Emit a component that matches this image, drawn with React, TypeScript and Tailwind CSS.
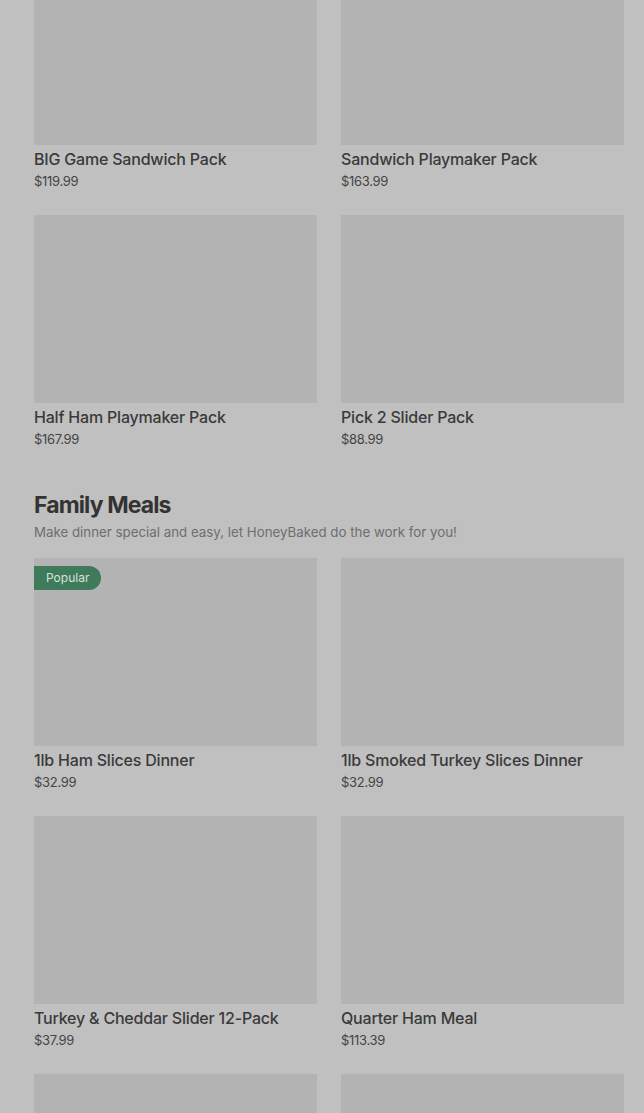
type Product = {
  name?: string;
  price?: string;
  badge?: string;
};

const topProducts: Product[] = [
  { name: "BIG Game Sandwich Pack", price: "$119.99" },
  { name: "Sandwich Playmaker Pack", price: "$163.99" },
  { name: "Half Ham Playmaker Pack", price: "$167.99" },
  { name: "Pick 2 Slider Pack", price: "$88.99" },
];

// last row only shows its images above the fold
const familyMeals: Product[] = [
  { name: "1lb Ham Slices Dinner", price: "$32.99", badge: "Popular" },
  { name: "1lb Smoked Turkey Slices Dinner", price: "$32.99" },
  { name: "Turkey & Cheddar Slider 12-Pack", price: "$37.99" },
  { name: "Quarter Ham Meal", price: "$113.39" },
  {},
  {},
];

function ProductCard({ product }: { product: Product }) {
  return (
    <div className="flex flex-col">
      <div className="relative h-[188px] bg-[#b3b3b3]">
        {product.badge && (
          <span className="absolute left-0 top-2 rounded-r-full bg-[#3f7a5b] py-[3px] pl-3 pr-3 text-[12px] leading-[18px] text-[#d6e3da]">
            {product.badge}
          </span>
        )}
      </div>
      {product.name && (
        <>
          <h3 className="mt-0.5 text-[16px] font-medium leading-6 tracking-[-0.2px] text-[#3a3a3a]">
            {product.name}
          </h3>
          <p className="text-[13px] leading-5 tracking-[-0.3px] text-[#454545]">{product.price}</p>
        </>
      )}
    </div>
  );
}

export default function App() {
  return (
    <div
      className="h-[1113px] overflow-hidden bg-[#c0c0c0] pl-[34px] pr-[20px]"
      style={{ fontFamily: "Inter, 'Noto Sans', sans-serif" }}
    >
      {/* top section, scrolled part way */}
      <div className="-mt-[43px] grid grid-cols-2 gap-x-6 gap-y-6">
        {topProducts.map((p, i) => (
          <ProductCard key={i} product={p} />
        ))}
      </div>

      {/* Family Meals */}
      <section className="mt-[41px]">
        <h2 className="text-[23px] font-bold leading-[30px] tracking-[-0.9px] text-[#333333]">
          Family Meals
        </h2>
        <p className="mt-0.5 text-[13.3px] leading-5 text-[#6e6e6e]">
          Make dinner special and easy, let HoneyBaked do the work for you!
        </p>
        <div className="mt-4 grid grid-cols-2 gap-x-6 gap-y-6">
          {familyMeals.map((p, i) => (
            <ProductCard key={i} product={p} />
          ))}
        </div>
      </section>
    </div>
  );
}
